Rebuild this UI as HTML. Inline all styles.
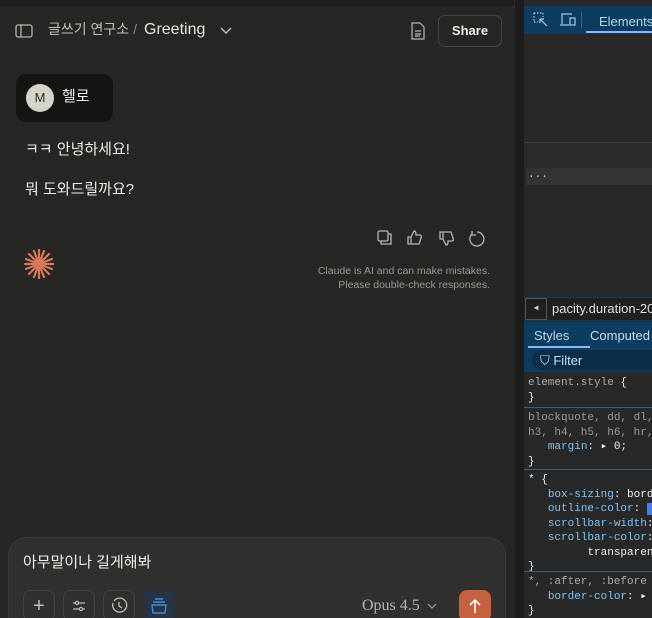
<!DOCTYPE html>
<html><head><meta charset="utf-8"><style>
*{box-sizing:border-box;margin:0;padding:0}
html,body{width:652px;height:618px;overflow:hidden}
body{background:#1f1f1e;font-family:"Liberation Sans","Noto Sans CJK KR",sans-serif;position:relative}
.main{position:absolute;left:0;top:0;width:514px;height:618px;background:#262624;color:#f0eee6;overflow:hidden}
.sep{position:absolute;left:514px;top:0;width:10px;height:618px;background:#1c1c1b;border-left:1px solid #2c2c2a}
.dev{position:absolute;left:524px;top:0;width:128px;height:618px;background:#282828;font-family:"Liberation Mono",monospace;color:#ccc;font-size:12px;overflow:hidden}
.abs{position:absolute;white-space:nowrap}
.mono{font-family:"Liberation Mono",monospace;font-size:11px;white-space:pre;line-height:14.5px}
.t{line-height:1.2}
</style></head><body>
<div class="main">
 <div class="abs" style="left:0;top:0;width:514px;height:6px;background:#1d1d1c"></div>
 <svg class="abs" style="left:15px;top:23px" width="18" height="16" viewBox="0 0 18 16" fill="none" stroke="#b8b5ad" stroke-width="1.3"><rect x="1" y="2" width="16" height="12" rx="2"/><line x1="6" y1="2" x2="6" y2="14"/></svg>
 <div class="abs t" style="left:48px;top:21px;font-size:14px;color:#c2c0b6">글쓰기 연구소 <span style="color:#8a8880">/</span></div>
 <div class="abs t" style="left:144px;top:20px;font-size:16px;color:#e8e6dc">Greeting</div>
 <svg class="abs" style="left:220px;top:27px" width="12" height="8" viewBox="0 0 12 8" fill="none" stroke="#c2c0b6" stroke-width="1.4"><path d="M1 1l5 5 5-5"/></svg>
 <svg class="abs" style="left:411px;top:22px" width="14" height="18" viewBox="0 0 14 18" fill="none" stroke="#b8b5ad" stroke-width="1.2"><path d="M1 1h8l4 4v12H1z"/><path d="M4 9h6M4 12h6M4 14h5"/></svg>
 <div class="abs" style="left:438px;top:15px;width:64px;height:32px;border:1px solid #45443f;border-radius:7px;font-size:13px;color:#f0eee6;text-align:center;line-height:30px;font-weight:bold">Share</div>
 <div class="abs" style="left:16px;top:74px;width:97px;height:48px;background:#141413;border-radius:10px"></div>
 <div class="abs" style="left:26px;top:84px;width:28px;height:28px;border-radius:50%;background:#d6d3ca;color:#2a2a28;font-size:13px;text-align:center;line-height:28px">M</div>
 <div class="abs t" style="left:62px;top:88px;font-size:15px">헬로</div>
 <div class="abs t" style="left:25px;top:141px;font-size:15px">ㅋㅋ 안녕하세요!</div>
 <div class="abs t" style="left:25px;top:181px;font-size:15px">뭐 도와드릴까요?</div>
 <svg class="abs" style="left:376px;top:229px" width="116" height="18" viewBox="0 0 116 18" fill="none" stroke="#b8b5ad" stroke-width="1.3"><rect x="2" y="2" width="10" height="10" rx="1.5"/><path d="M5 12v3h10V5h-3"/><path d="M35 8l3-6c2 0 2 2 2 4h4c1 0 2 1 1 3l-2 6h-8zM32 8h3v7h-3z"/><path d="M67 10l3 6c2 0 2-2 2-4h4c1 0 2-1 1-3l-2-6h-8zM64 3h3v7h-3z"/><path d="M101 3a7 7 0 1 1-5 2M96 2v4h4"/></svg>
 <svg class="abs" style="left:22px;top:247px" width="34" height="34" viewBox="0 0 34 34" stroke="#d97757" stroke-width="2.2" stroke-linecap="round"><g transform="translate(17 17)"><line x1="0" y1="-14" x2="0" y2="14"/><line x1="-14" y1="0" x2="14" y2="0"/><line x1="-10" y1="-10" x2="10" y2="10"/><line x1="-10" y1="10" x2="10" y2="-10"/><line x1="-5" y1="-13" x2="5" y2="13"/><line x1="-13" y1="-5" x2="13" y2="5"/><line x1="-13" y1="5" x2="13" y2="-5"/><line x1="-5" y1="13" x2="5" y2="-13"/></g></svg>
 <div class="abs" style="right:24px;top:264px;font-size:10.5px;color:#9a988f;text-align:right;line-height:14px">Claude is AI and can make mistakes.<br>Please double-check responses.</div>
 <div class="abs" style="left:8px;top:537px;width:498px;height:100px;background:#30302e;border:1px solid #3a3a37;border-radius:18px"></div>
 <div class="abs t" style="left:23px;top:554px;font-size:15px;color:#f0eee6">아무말이나 길게해봐</div>
 <div class="abs" style="left:23px;top:590px;width:32px;height:32px;border:1px solid #45443f;border-radius:8px;color:#c2c0b6;font-size:20px;text-align:center;line-height:30px">+</div>
 <div class="abs" style="left:63px;top:590px;width:32px;height:32px;border:1px solid #45443f;border-radius:8px"></div>
 <svg class="abs" style="left:71px;top:598px" width="16" height="16" viewBox="0 0 16 16" fill="none" stroke="#c2c0b6" stroke-width="1.2"><path d="M2 5h12M2 11h12"/><circle cx="6" cy="5" r="1.6" fill="#30302e"/><circle cx="10" cy="11" r="1.6" fill="#30302e"/></svg>
 <div class="abs" style="left:103px;top:590px;width:32px;height:32px;border:1px solid #45443f;border-radius:8px"></div>
 <svg class="abs" style="left:110px;top:597px" width="18" height="18" viewBox="0 0 18 18" fill="none" stroke="#c2c0b6" stroke-width="1.3"><path d="M4 4a7 7 0 1 1-1 2"/><path d="M9 5v4l3 2"/></svg>
 <div class="abs" style="left:143px;top:590px;width:32px;height:32px;background:#263444;border-radius:8px"></div>
 <svg class="abs" style="left:150px;top:597px" width="18" height="18" viewBox="0 0 18 18" fill="none" stroke="#3b8ee0" stroke-width="1.4"><path d="M5 2h8M3 5h12M2 8h14l-1 8H3z"/></svg>
 <div class="abs t" style="left:362px;top:596px;font-family:'Liberation Serif',serif;font-size:16px;color:#b8b5ad">Opus 4.5</div>
 <svg class="abs" style="left:427px;top:603px" width="10" height="6" viewBox="0 0 10 6" fill="none" stroke="#9a988f" stroke-width="1.2"><path d="M1 1l4 4 4-4"/></svg>
 <div class="abs" style="left:459px;top:590px;width:32px;height:32px;background:#c6613f;border-radius:8px"></div>
 <svg class="abs" style="left:467px;top:597px" width="16" height="18" viewBox="0 0 16 18" fill="none" stroke="#fff" stroke-width="1.6"><path d="M8 16V3M3 8l5-5 5 5"/></svg>
</div>
<div class="sep"></div>
<div class="dev">
 <div class="abs" style="left:0;top:6px;width:128px;height:28px;background:#0c3d60"></div>
 <svg class="abs" style="left:9px;top:12px" width="16" height="16" viewBox="0 0 16 16" fill="none" stroke="#a8c8e8" stroke-width="1.2"><path d="M1 1h9v4M1 1v9h4" stroke-dasharray="1.5 1.5"/><path d="M7 7l7 7M7 7h4M7 7v4"/></svg>
 <svg class="abs" style="left:35px;top:12px" width="18" height="16" viewBox="0 0 18 16" fill="none" stroke="#a8c8e8" stroke-width="1.2"><path d="M3 12V2h10M1 13h9"/><rect x="11" y="6" width="5" height="7"/></svg>
 <div class="abs" style="left:57px;top:12px;width:1px;height:16px;background:#3a6080"></div>
 <div class="abs" style="left:75px;top:15px;line-height:1;font-family:'Liberation Sans',sans-serif;font-size:13px;color:#b8d4f0">Elements</div>
 <div class="abs" style="left:62px;top:31px;width:66px;height:2px;background:#8ab4f8"></div>
 <div class="abs" style="left:0;top:142px;width:128px;height:42px;background:#2a2a2a;border-top:1px solid #3a3a3a"></div>
 <div class="abs" style="left:2px;top:168px;width:126px;height:17px;background:#333"></div>
 <div class="abs" style="left:4px;top:169px;font-size:11px;color:#ccc">...</div>
 <div class="abs" style="left:0;top:297px;width:128px;height:24px;background:#202020;border-top:1px solid #0c3d60;border-bottom:1px solid #0c3d60"></div>
 <div class="abs" style="left:1px;top:298px;width:22px;height:22px;border:1px solid #555;color:#ccc;font-size:8px;text-align:center;line-height:20px">◀</div>
 <div class="abs" style="left:28px;top:302px;line-height:1;font-family:'Liberation Sans',sans-serif;font-size:13px;color:#e0e0e0">pacity.duration-20</div>
 <div class="abs" style="left:0;top:322px;width:128px;height:50px;background:#0c3d60"></div>
 <div class="abs" style="left:10px;top:329px;line-height:1;font-family:'Liberation Sans',sans-serif;font-size:13px;color:#b8d4f0">Styles</div>
 <div class="abs" style="left:66px;top:329px;line-height:1;font-family:'Liberation Sans',sans-serif;font-size:13px;color:#c8dcf0">Computed</div>
 <div class="abs" style="left:4px;top:346px;width:62px;height:2px;background:#8ab4f8"></div>
 <div class="abs" style="left:8px;top:350px;width:130px;height:20px;background:#0a2e4a;border-radius:10px"></div>
 <div class="abs" style="left:16px;top:354px;line-height:1;font-family:'Liberation Sans',sans-serif;font-size:13px;color:#c8dcf0">⛉ Filter</div>
 <div class="abs mono" style="left:4px;top:376px;color:#aaa">element.style <span style="color:#eee">{</span>
<span style="color:#eee">}</span></div>
 <div class="abs" style="left:0;top:407px;width:128px;height:1px;background:#3a6080"></div>
 <div class="abs mono" style="left:4px;top:411px;color:#999">blockquote, dd, dl,
h3, h4, h5, h6, hr,
   <span style="color:#7cc4f8">margin</span><span style="color:#eee">: ▸ 0;</span>
<span style="color:#eee">}</span></div>
 <div class="abs" style="left:0;top:469px;width:128px;height:1px;background:#3a6080"></div>
 <div class="abs mono" style="left:4px;top:473px;color:#eee">* {
   <span style="color:#7cc4f8">box-sizing</span>: bord
   <span style="color:#7cc4f8">outline-color</span>: <span style="background:#3b82f6">  </span>
   <span style="color:#7cc4f8">scrollbar-width</span>:
   <span style="color:#7cc4f8">scrollbar-color</span>:
         transparent
}</div>
 <div class="abs" style="left:0;top:571px;width:128px;height:1px;background:#3a6080"></div>
 <div class="abs mono" style="left:4px;top:575px;color:#aaa">*, :after, :before
   <span style="color:#7cc4f8">border-color</span><span style="color:#eee">: ▸ </span>
<span style="color:#eee">}</span></div>
</div>
</body></html>
